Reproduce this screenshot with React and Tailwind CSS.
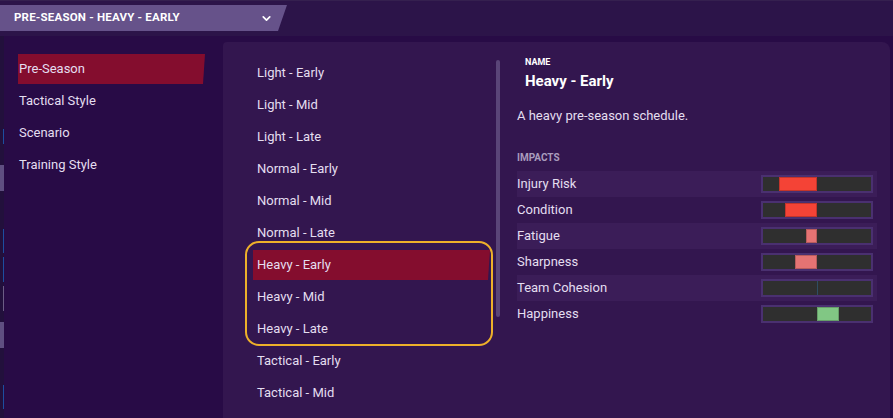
import { ChevronDown } from 'lucide-react';

const sections = ['Pre-Season', 'Tactical Style', 'Scenario', 'Training Style'];

const schedules = [
  'Light - Early', 'Light - Mid', 'Light - Late',
  'Normal - Early', 'Normal - Mid', 'Normal - Late',
  'Heavy - Early', 'Heavy - Mid', 'Heavy - Late',
  'Tactical - Early', 'Tactical - Mid',
];

// value -100..100, negative fills left of centre
const impacts = [
  { label: 'Injury Risk', value: -70, color: '#f44336' },
  { label: 'Condition', value: -59, color: '#f44336' },
  { label: 'Fatigue', value: -20, color: '#e57373' },
  { label: 'Sharpness', value: -41, color: '#e57373' },
  { label: 'Team Cohesion', value: 0, color: '#2f4d63' },
  { label: 'Happiness', value: 41, color: '#81c784' },
];

function Row({ label, selected }) {
  return (
    <div className="h-[32px] py-[1px]">
      <div className={`h-[30px] flex items-center pl-[4px] ${selected ? "bg-[#840d2e] [clip-path:polygon(0_0,100%_0,calc(100%-2px)_100%,0_100%)]" : ''}`}>
        {label}
      </div>
    </div>
  );
}

function ImpactBar({ value, color }) {
  const left = 50 + Math.min(value, 0) / 2;
  const width = Math.abs(value) / 2;
  return (
    <div className="relative w-[112px] h-[18px] border-2 border-[#4a3070] bg-[#2f2f2f]">
      {value === 0
        ? <div className="absolute top-0 bottom-0 left-1/2 w-px" style={{ background: color }} />
        : <div className="absolute top-0 bottom-0 border border-black/20" style={{ left: `${left}%`, width: `${width}%`, background: color }} />}
    </div>
  );
}

export default function App() {
  return (
    <div className="w-[893px] h-[418px] overflow-hidden bg-[#280b46] font-['Roboto',sans-serif] text-[13px] text-[#e4def0]">
      {/* top bar */}
      <div className="h-[36px] bg-[#2c1449] border-t border-[#35204f] pt-[4px]">
        <div className="w-[287px] h-[26px] bg-[#66528a] flex items-center justify-between pl-[14px] pr-[14px] [clip-path:polygon(0_0,100%_0,calc(100%-9px)_100%,0_100%)]">
          <span className="text-[11.5px] font-bold text-white tracking-[0.2px]">PRE-SEASON - HEAVY - EARLY</span>
          <ChevronDown size={13} strokeWidth={3.2} className="text-white" />
        </div>
      </div>

      <div className="flex h-[382px]">
        {/* left strip */}
        <div className="w-[4px] flex flex-col bg-[#22103c]">
          <div className="h-[93px]" />
          <div className="h-[15px] w-[1px] ml-[3px] bg-[#1d4ea0]" />
          <div className="h-[21px]" />
          <div className="h-[26px] bg-[#5f4f81]" />
          <div className="h-[38px]" />
          <div className="h-[24px] w-[1px] ml-[3px] bg-[#1d4ea0]" />
          <div className="h-[4px]" />
          <div className="h-[25px] w-[1px] ml-[3px] bg-[#1d4ea0]" />
          <div className="h-[4px]" />
          <div className="h-[25px] w-[1px] ml-[3px] bg-[#6b5d85]" />
          <div className="h-[11px]" />
          <div className="h-[26px] bg-[#5f4f81]" />
          <div className="h-[37px]" />
          <div className="h-[24px] w-[1px] ml-[3px] bg-[#1d4ea0]" />
        </div>

        {/* left menu */}
        <div className="w-[219px] pt-[17px] pl-[14px] pr-[18px]">
          {sections.map((s, i) => (
            <div key={s} className="h-[32px] py-[1px]">
              <div className={`h-[30px] flex items-center pl-px ${i === 0 ? "bg-[#840d2e] [clip-path:polygon(0_0,100%_0,calc(100%-2px)_100%,0_100%)]" : ''}`}>
                {s}
              </div>
            </div>
          ))}
        </div>

        {/* card */}
        <div className="mt-[6px] w-[667px] bg-[#33164f] rounded-tl-[4px] rounded-tr-[8px] flex pt-[15px] pl-[30px]">
          <div className="w-[237px]">
            {schedules.slice(0, 6).map(s => <Row key={s} label={s} />)}
            <div className="relative">
              <div className="absolute -left-[8px] -right-[3px] -top-[8px] -bottom-[1px] border-2 border-[#eeb02a] rounded-[14px] pointer-events-none" />
              {schedules.slice(6, 9).map((s, i) => <Row key={s} label={s} selected={i === 0} />)}
            </div>
            {schedules.slice(9).map(s => <Row key={s} label={s} />)}
          </div>

          <div className="ml-[6px] mt-[3px] w-[4px] h-[257px] rounded-full bg-[#5a4578]" />

          <div className="ml-[17px] w-[360px]">
            <div className="pl-[8px]">
              <div className="h-[10px] leading-[10px] text-[9px] font-bold text-white">NAME</div>
              <div className="mt-[4px] h-[20px] leading-[20px] text-[15px] font-bold text-white">Heavy - Early</div>
            </div>
            <div className="mt-[16px] h-[18px] leading-[18px]">A heavy pre-season schedule.</div>
            <div className="mt-[27px] h-[12px] leading-[12px] text-[10px] font-bold text-[#a99cbd]">IMPACTS</div>
            <div className="mt-[7px]">
              {impacts.map((m, i) => (
                <div key={m.label} className={`h-[26px] flex items-center justify-between pr-[4px] ${i % 2 === 0 ? 'bg-[#3b1d58]' : ''}`}>
                  <span>{m.label}</span>
                  <ImpactBar value={m.value} color={m.color} />
                </div>
              ))}
            </div>
          </div>
        </div>
      </div>
    </div>
  );
}
